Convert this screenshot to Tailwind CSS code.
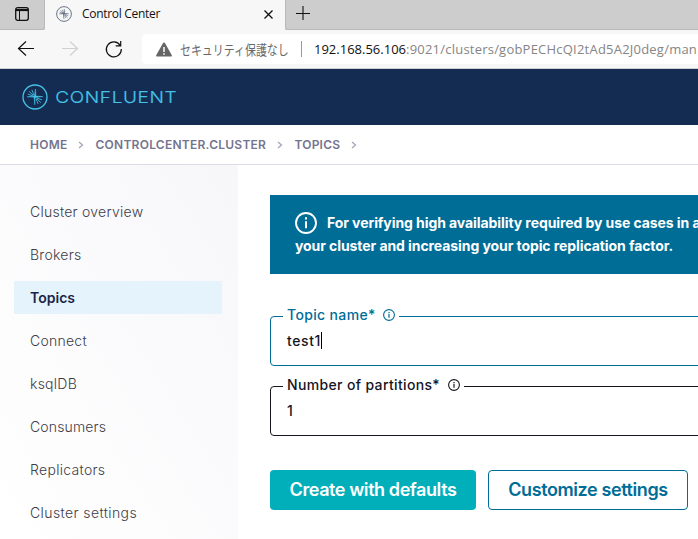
<!DOCTYPE html>
<html lang="ja">
<head>
<meta charset="utf-8">
<title>Control Center</title>
<script src="https://cdn.jsdelivr.net/npm/@tailwindcss/browser@4"></script>
</head>
<body class="w-[698px] h-[539px] overflow-hidden bg-white font-['Inter',sans-serif] flex flex-col">
<svg class="hidden">
  <symbol id="spark" viewBox="0 0 26 26">
    <circle cx="13" cy="13" r="12" fill="none" stroke="currentColor" stroke-width="1.3"/>
    <path d="M13.400 5l.5 7.100 6.900.5-6.900.8-.9.500-.2 6.900-.6-6.900-.8-.8-6.200-.3 6.200-.6 1.200-.8z" fill="currentColor" stroke="currentColor" stroke-width=".5"/>
    <path d="M11.500 11.500L7 7.300M12 11L9.800 5.800M11 12L5.800 10M14.500 14.500l4.400 4.200M14.100 15l2 4.800M15 14.100l5 1.800" fill="none" stroke="currentColor" stroke-width=".85"/>
  </symbol>
  <symbol id="info" viewBox="0 0 12 12">
    <circle cx="6" cy="6" r="5.4" fill="none" stroke="currentColor" stroke-width="1.1"/>
    <path d="M6 5.100v3.700M6 3v1.200" fill="none" stroke="currentColor" stroke-width="1.200"/>
  </symbol>
  <symbol id="chev" viewBox="0 0 6 8"><path d="M1 1l3.500 3L1 7" fill="none" stroke="currentColor" stroke-width="1.300"/></symbol>
</svg>

<!-- Browser tab strip -->
<div class="h-[30px] shrink-0 flex bg-[#cdcdcd] font-['Open_Sans',sans-serif]">
  <div class="w-[45px] h-[29.5px] flex pt-[7px] pl-[15px] rounded-br-[4px] border-b border-r border-[#b9b9b9]">
    <svg class="w-[14px] h-[14px]" viewBox="0 0 14 14" fill="none" stroke="#111"><rect x=".7" y=".7" width="12.600" height="12.600" rx="2" stroke-width="1.300"/><path d="M1 3h12" stroke-width="2.200"/><path d="M4.500 4v9" stroke-width="1"/></svg>
  </div>
  <div class="w-[240px] bg-[#f7f7f7] flex items-start relative">
    <svg class="w-[16px] h-[16px] mt-[6px] ml-[11px] text-[#44546d]"><use href="#spark"/></svg>
    <span class="ml-[10px] mt-[5px] text-[12px] leading-[18px] text-[#111] whitespace-nowrap tracking-[-0.3px]">Control Center</span>
    <svg class="absolute left-[219px] top-[10px] w-[9px] h-[9px]" viewBox="0 0 9 9" stroke="#111" stroke-width="1.300"><path d="M.5.5l8 8M8.500.5l-8 8"/></svg>
  </div>
  <div class="flex-1 h-[30px] border-b border-l border-[#b9b9b9] rounded-bl-[4px] pt-[6px] pl-[10px]">
    <svg class="w-[14px] h-[14px]" viewBox="0 0 14 14" stroke="#111" stroke-width="1.100"><path d="M7 0v14M0 7.500h14"/></svg>
  </div>
</div>

<!-- Browser toolbar -->
<div class="h-[39px] shrink-0 flex bg-[#f7f7f7] border-b border-[#d0d0d0] font-['Open_Sans','Noto_Sans_CJK_JP',sans-serif]">
  <svg class="w-[142px] h-[38px] shrink-0" viewBox="0 0 142 38" fill="none" stroke="#111" stroke-width="1.200">
    <path d="M34 18.500H18.500M26 11.500l-7.500 7 7.500 7"/>
    <path stroke="#d0d0d0" d="M62 18.500h15.500M70 11.500l7.500 7-7.500 7"/>
    <path d="M120.200 15.500A7.500 7.500 0 1 0 121.300 19M120.700 11v4.800h-5"/>
  </svg>
  <div class="flex-1 h-[30px] mt-1 bg-white rounded-l-[4px] flex items-center text-[13px] whitespace-nowrap overflow-hidden">
    <svg class="w-[16px] h-[15px] ml-[14px] shrink-0" viewBox="0 0 16 15"><path d="M7.200.8Q8 0 8.800.8L15.700 13q.5 1.500-1 1.500H1.300q-1.500 0-1-1.500z" fill="#666"/><path d="M8 5v5M8 11.300v1.500" stroke="#fff" stroke-width="1.500"/></svg>
    <span class="w-[120px] shrink-0 ml-[8px] mb-[1px] text-[#686868] text-[13.500px] leading-[20px] font-['Noto_Sans_CJK_JP',sans-serif]"><span class="inline-block origin-left scale-x-[.81]">セキュリティ保護なし</span></span>
    <span class="w-px shrink-0 h-[16px] bg-[#999] ml-[1px]"></span>
    <span class="ml-[12px] text-[#858585] leading-[20px]"><span class="text-[#111]">192.168.56.106</span><span class="tracking-[.22px]">:9021/clusters/gobPECHcQI2tAd5A2J0deg/man</span></span>
  </div>
</div>

<header class="h-[56px] shrink-0 bg-[#152c52] flex items-center pl-[21.500px] text-[#45c4e8]">
  <svg class="w-[26px] h-[26px]"><use href="#spark"/></svg>
  <svg class="ml-[7px] w-[124px] h-[20px]" viewBox="0 0 124 20"><g transform="scale(1.150 1)"><text x=".3" y="16" textLength="105.500" font-family="Inter" font-size="16.500" font-weight="300" fill="currentColor" stroke="currentColor" stroke-width=".2">CONFLUENT</text></g></svg>
</header>

<nav class="h-[40px] shrink-0 border-b border-[#dcdce6] flex items-center pl-[30px] text-[12px] font-semibold text-[#74748f] whitespace-nowrap">
  <span class="w-[48px] shrink-0 tracking-[.25px]">HOME</span>
  <svg class="w-[6px] h-[8px] shrink-0 text-[#a5a5b8]"><use href="#chev"/></svg>
  <span class="w-[188px] shrink-0 pl-[11.500px] tracking-[.25px]">CONTROLCENTER.CLUSTER</span>
  <svg class="w-[6px] h-[8px] shrink-0 ml-[5px] text-[#a5a5b8]"><use href="#chev"/></svg>
  <span class="w-[62px] shrink-0 pl-[11.500px] tracking-[.2px]">TOPICS</span>
  <svg class="w-[6px] h-[8px] shrink-0 ml-[6px] text-[#a5a5b8]"><use href="#chev"/></svg>
</nav>

<div class="flex-1 flex min-h-0">
  <aside class="w-[238px] shrink-0 bg-linear-to-bl from-[#f7f7fa] to-white pt-[30px] px-[14px] pr-[16px] flex flex-col gap-[10px] text-[14px] font-light tracking-[.25px] text-[#3d3d48]">
    <a class="h-[33px] shrink-0 pl-[16px] flex items-center">Cluster overview</a>
    <a class="h-[33px] shrink-0 pl-[16px] flex items-center">Brokers</a>
    <a class="h-[33px] shrink-0 pl-[16px] flex items-center bg-[#e5f4fc] font-semibold tracking-[.02px] text-[#1b2547]">Topics</a>
    <a class="h-[33px] shrink-0 pl-[16px] flex items-center">Connect</a>
    <a class="h-[33px] shrink-0 pl-[16px] flex items-center">ksqlDB</a>
    <a class="h-[33px] shrink-0 pl-[16px] flex items-center tracking-[.15px]">Consumers</a>
    <a class="h-[33px] shrink-0 pl-[16px] flex items-center tracking-[.3px]">Replicators</a>
    <a class="h-[33px] shrink-0 pl-[16px] flex items-center tracking-[.4px]">Cluster settings</a>
  </aside>
  <main class="flex-1 min-w-0 pl-[32px] pt-[30px] overflow-hidden">
    <div class="h-[79px] bg-[#006d97] text-white font-bold text-[14px] pl-[25px] pt-[16px] whitespace-nowrap">
      <div class="h-[23px] flex items-center"><svg class="w-[22px] h-[22px] mr-[10px] shrink-0" viewBox="0 0 22 22" fill="none" stroke="#fff"><circle cx="11" cy="11" r="10" stroke-width="1.900"/><path d="M11 9.300v7M11 5.300v2.200" stroke-width="2"/></svg><span class="tracking-[-.08px]">For verifying high availability required by use cases in a</span></div>
      <div class="leading-[23px] tracking-[-.08px]">your cluster and increasing your topic replication factor.</div>
    </div>
    <div class="relative mt-[42px] h-[50px] w-[460px] border border-[#006d97] rounded-[4px] px-[16px] pb-[2px] flex items-center text-[14px] font-medium text-[#15151f]">
      <span class="absolute left-[12px] -top-[12px] h-[20px] w-[116px] bg-white pl-[4px] flex items-center justify-between pr-[4px] text-[#006d97] tracking-[.35px]"><span class="-mt-[2px]">Topic name*</span><svg class="w-[12px] h-[12px]"><use href="#info"/></svg></span>
      <span class="tracking-[.6px]">test1</span><span class="w-px h-[17px] bg-black"></span>
    </div>
    <div class="relative mt-[20px] h-[50px] w-[460px] border border-[#15151f] rounded-[4px] px-[16px] pb-[2px] flex items-center text-[14px] font-medium text-[#15151f]">
      <span class="absolute left-[12px] -top-[12px] h-[20px] w-[181px] bg-white pl-[4px] flex items-center justify-between pr-[4px] tracking-[.35px]"><span class="-mt-[2px]">Number of partitions*</span><svg class="w-[12px] h-[12px]"><use href="#info"/></svg></span>
      <span>1</span>
    </div>
    <div class="mt-[34px] flex gap-[12px] text-[18px]">
      <button class="w-[206px] h-[40px] pb-[2px] shrink-0 rounded-[4px] bg-[#00afba] text-white font-semibold tracking-[-.42px] whitespace-nowrap">Create with defaults</button>
      <button class="w-[200px] h-[40px] pb-[2px] shrink-0 rounded-[4px] border border-[#006d97] text-[#006d97] font-semibold tracking-[-.4px] whitespace-nowrap">Customize settings</button>
    </div>
  </main>
</div>
</body>
</html>
